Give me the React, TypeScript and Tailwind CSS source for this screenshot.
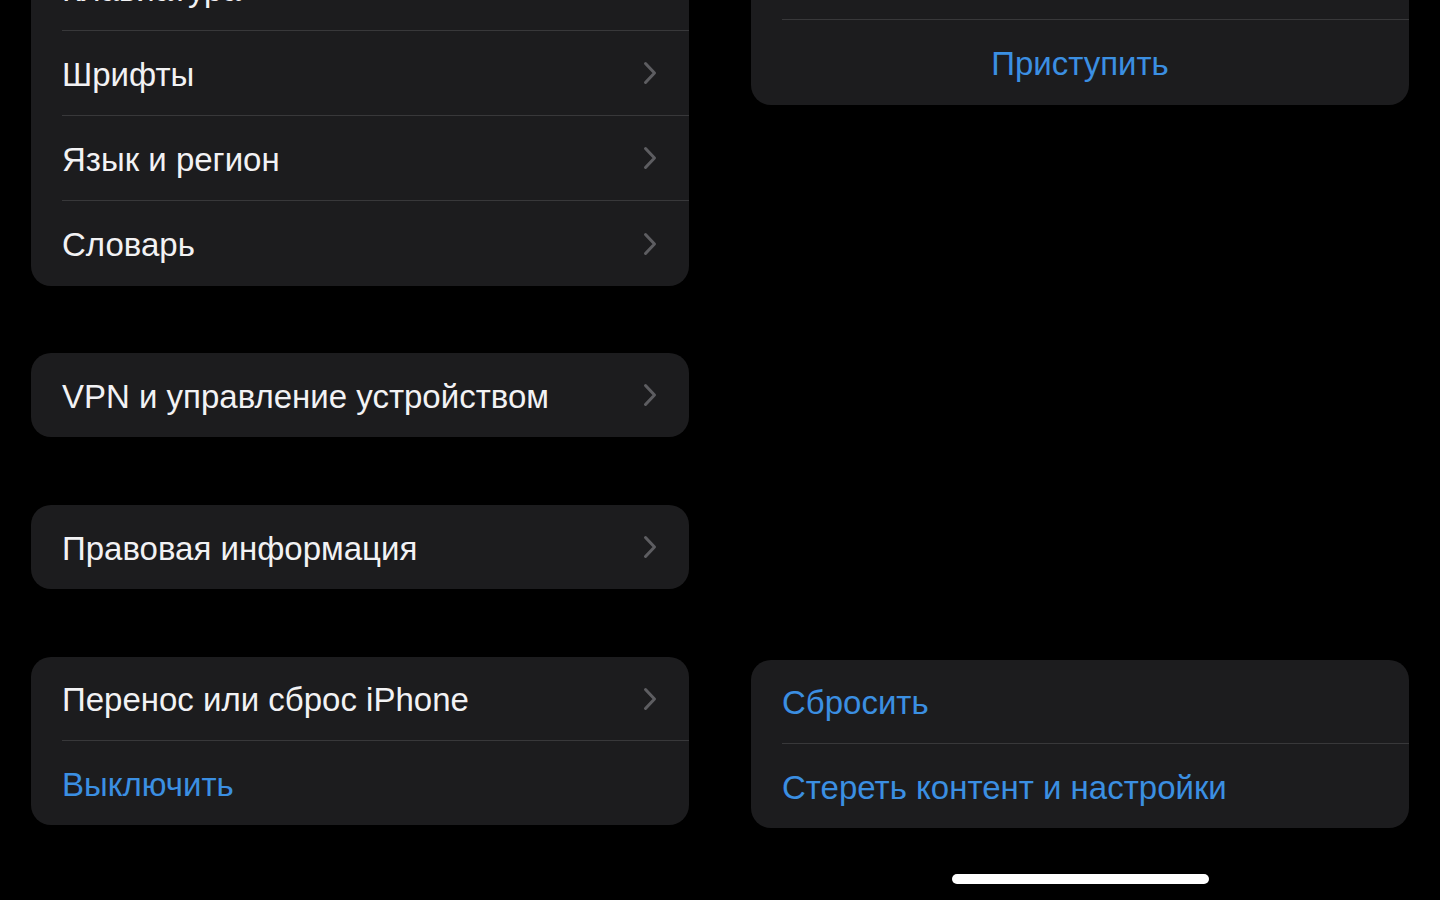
import React from "react";

type Item = { label: string; blue?: boolean; chevron?: boolean; center?: boolean };

function Chevron() {
  return (
    <svg width="14" height="24" viewBox="0 0 14 24" className="shrink-0">
      <polyline
        points="2.5,2.5 11.5,12 2.5,21.5"
        fill="none"
        stroke="#5d5d61"
        strokeWidth="3"
        strokeLinecap="round"
        strokeLinejoin="round"
      />
    </svg>
  );
}

function Group({
  items,
  rowHeight = "h-[85px]",
  className = "",
}: {
  items: Item[];
  rowHeight?: string;
  className?: string;
}) {
  return (
    <div className={`overflow-hidden rounded-[20px] bg-[#1c1c1e] ${className}`}>
      {items.map((item, i) => (
        <div key={i} className={item.center ? "" : "pl-[31px]"}>
          <div
            className={`flex ${rowHeight} items-center ${
              i < items.length - 1 ? "border-b border-[#38383a]" : ""
            } ${item.center ? "justify-center" : "justify-between pr-[32px]"}`}
          >
            <span
              className={`translate-y-[1px] text-[33px] leading-none ${
                item.blue ? "text-[#3b8fe2]" : "text-[#f2f2f4]"
              }`}
            >
              {item.label}
            </span>
            {item.chevron && <Chevron />}
          </div>
        </div>
      ))}
    </div>
  );
}

export default function App() {
  return (
    <div
      className="flex h-[900px] gap-[62px] overflow-hidden bg-black px-[31px]"
      style={{ fontFamily: '"Liberation Sans", Arial, sans-serif' }}
    >
      {/* left column: settings list */}
      <div className="w-[658px] shrink-0">
        <Group
          className="-mt-[54px]"
          items={[
            { label: "Клавиатура", chevron: true },
            { label: "Шрифты", chevron: true },
            { label: "Язык и регион", chevron: true },
            { label: "Словарь", chevron: true },
          ]}
        />
        <Group
          className="mt-[67px]"
          rowHeight="h-[84px]"
          items={[{ label: "VPN и управление устройством", chevron: true }]}
        />
        <Group
          className="mt-[68px]"
          rowHeight="h-[84px]"
          items={[{ label: "Правовая информация", chevron: true }]}
        />
        <Group
          className="mt-[68px]"
          rowHeight="h-[84px]"
          items={[
            { label: "Перенос или сброс iPhone", chevron: true },
            { label: "Выключить", blue: true },
          ]}
        />
      </div>

      {/* right column: transfer / reset detail */}
      <div className="flex w-[658px] shrink-0 flex-col">
        <Group
          className="-mt-[65px]"
          items={[{ label: "" }, { label: "Приступить", blue: true, center: true }]}
        />
        <Group
          className="mt-[555px]"
          rowHeight="h-[84px]"
          items={[
            { label: "Сбросить", blue: true },
            { label: "Стереть контент и настройки", blue: true },
          ]}
        />
        <div className="mx-auto mt-[46px] h-[10px] w-[257px] rounded-full bg-white" />
      </div>
    </div>
  );
}
